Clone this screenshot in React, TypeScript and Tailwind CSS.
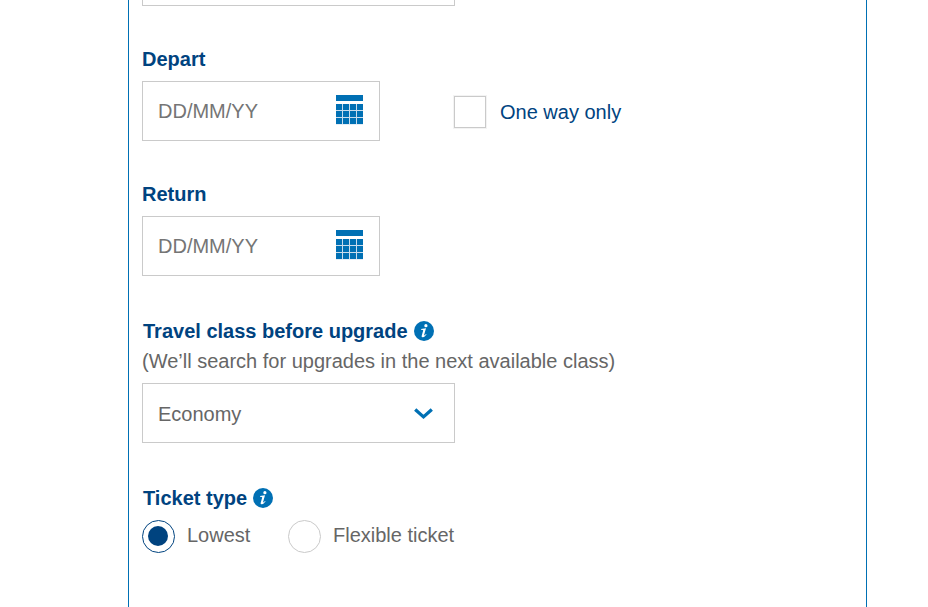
import { useState } from "react";

type DateFieldProps = {
  id: string;
  label: string;
  value: string;
  onChange: (value: string) => void;
};

const TICKET_TYPES = [
  { id: "lowest", name: "Lowest", width: "w-[146px]" },
  { id: "flexible", name: "Flexible ticket", width: "" },
];

function CalendarIcon() {
  return (
    <svg width="27" height="30" viewBox="0 0 27 30" className="shrink-0 mb-[2px]">
      <rect width="27" height="6" fill="#0070b4" />
      <rect y="9" width="27" height="20.5" fill="#c9dcec" />
      {[9, 16, 23].map((y) =>
        [0, 7, 14, 21].map((x) => (
          <rect key={`${x}-${y}`} x={x} y={y} width="6" height="6" fill="#0070b4" />
        ))
      )}
    </svg>
  );
}

function InfoIcon() {
  return (
    <svg width="20" height="20" viewBox="0 0 20 20" className="shrink-0">
      <circle cx="10" cy="10" r="10" fill="#0070b4" />
      <circle cx="11.9" cy="4.7" r="1.6" fill="#fff" />
      <path d="M7 8.1 L12 7.3 L10 14.3 Q10 14.8 12.2 13.1 L12.5 13.6 Q10.5 16.3 8.6 16.3 Q7.3 16.2 7.7 14.7 L9.2 9.4 Q9.2 8.7 7 8.8 Z" fill="#fff" />
    </svg>
  );
}

function DateField({ id, label, value, onChange }: DateFieldProps) {
  return (
    <div>
      <label htmlFor={id} className="block font-bold text-[#00437f] mb-[10px]">
        {label}
      </label>
      <div className="w-[238px] h-[60px] flex items-center justify-between border border-[#cacaca] pl-[15px] pr-4">
        <input
          id={id}
          type="text"
          placeholder="DD/MM/YY"
          className="w-[140px] outline-none text-[#666] placeholder:text-[#757575]"
          value={value}
          onChange={(e) => onChange(e.target.value)}
        />
        <CalendarIcon />
      </div>
    </div>
  );
}

export default function App() {
  const [depart, setDepart] = useState("");
  const [returnDate, setReturnDate] = useState("");
  const [oneWay, setOneWay] = useState(false);
  const [ticket, setTicket] = useState("lowest");

  return (
    <div className="h-[607px] overflow-hidden bg-white font-['Liberation_Sans',Arial,sans-serif] text-[20px] leading-6">
      <form className="ml-32 w-[739px] h-full border-x border-[#0070b4] px-[13px]">
        {/* Bottom edge of the previous field */}
        <div className="w-[313px] h-[6px] border border-t-0 border-[#cacaca]" />

        {/* Depart */}
        <div className="flex items-end mt-[41px]">
          <DateField id="depart" label="Depart" value={depart} onChange={setDepart} />
          <label className="flex items-center ml-[74px] mb-[13px] text-[#00437f] cursor-pointer">
            <input
              type="checkbox"
              className="appearance-none w-8 h-8 border border-[#cacaca] shadow-[0_0_0_1px_#f3f3f3] checked:bg-[#00437f]"
              checked={oneWay}
              onChange={(e) => setOneWay(e.target.checked)}
            />
            <span className="ml-[14px]">One way only</span>
          </label>
        </div>

        {/* Return */}
        <div className="mt-[41px]">
          <DateField id="return" label="Return" value={returnDate} onChange={setReturnDate} />
        </div>

        {/* Travel class */}
        <div className="mt-[43px]">
          <div className="flex items-center gap-1.5">
            <h2 className="font-bold text-[#00437f] pl-px">Travel class before upgrade</h2>
            <InfoIcon />
          </div>
          <p className="mt-[6px] text-[#666]">
            (We’ll search for upgrades in the next available class)
          </p>
          <button
            type="button"
            className="mt-[10px] w-[313px] h-[60px] flex items-center justify-between border border-[#cacaca] pt-[2px] pl-[15px] pr-[21px] text-[#666]"
          >
            <span>Economy</span>
            <svg width="19" height="12" viewBox="0 0 19 12">
              <path d="M1.2 1.5 L9.5 8.9 L17.8 1.5" fill="none" stroke="#0070b4" strokeWidth="3.3" />
            </svg>
          </button>
        </div>

        {/* Ticket type */}
        <div className="mt-[43px]">
          <div className="flex items-center gap-1.5">
            <h2 className="font-bold text-[#00437f] pl-px">Ticket type</h2>
            <InfoIcon />
          </div>
          <div className="flex mt-[10px]">
            {TICKET_TYPES.map((type) => (
              <label key={type.id} className={`flex items-center cursor-pointer text-[#666] ${type.width}`}>
                <input
                  type="radio"
                  name="ticket"
                  className="peer sr-only"
                  checked={ticket === type.id}
                  onChange={() => setTicket(type.id)}
                />
                <span className="w-[33px] h-[33px] rounded-full border border-[#cacaca] flex items-center justify-center peer-checked:border-[#00437f]">
                  {ticket === type.id && (
                    <span className="w-5 h-5 mr-px mb-px rounded-full bg-[#00437f]" />
                  )}
                </span>
                <span className="ml-3 mb-[3px]">{type.name}</span>
              </label>
            ))}
          </div>
        </div>
      </form>
    </div>
  );
}
